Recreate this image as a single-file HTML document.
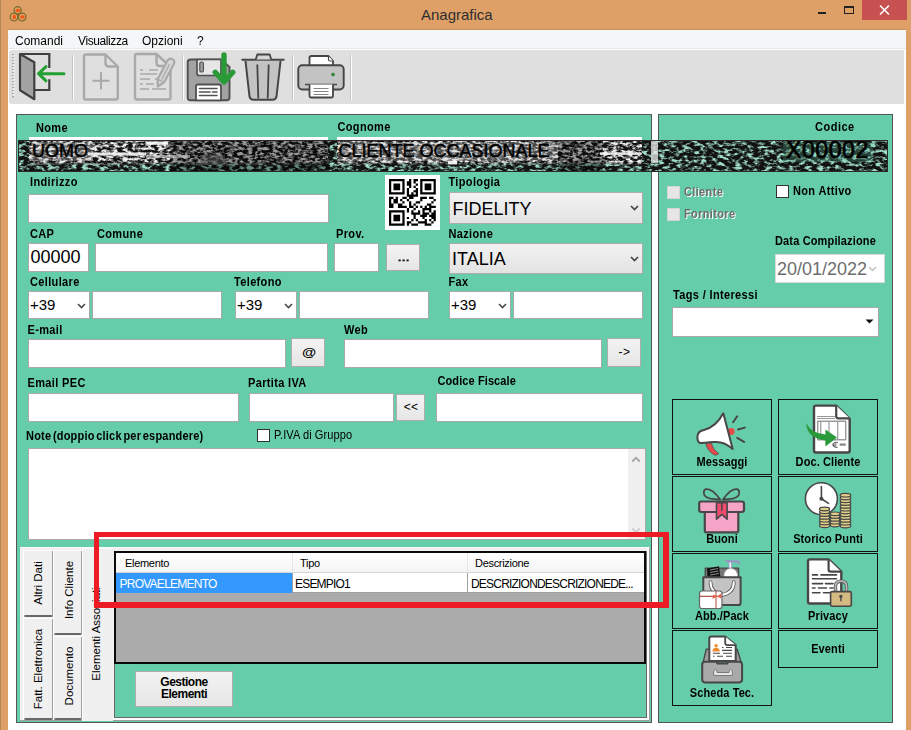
<!DOCTYPE html>
<html><head><meta charset="utf-8">
<style>
*{box-sizing:border-box;margin:0;padding:0}
html,body{width:911px;height:730px;overflow:hidden;background:#fff;font-family:"Liberation Sans",sans-serif}
.a{position:absolute}
.l{position:absolute;font:bold 11px/11px "Liberation Sans",sans-serif;color:#000;white-space:nowrap;letter-spacing:0.35px;transform:scaleY(1.08);transform-origin:0 85%}
.tb{position:absolute;background:#fff;border:1px solid #a9a9a9}
.cb{position:absolute;background:linear-gradient(#f2f2f2,#e3e3e3);border:1px solid #acacac}
.bt{position:absolute;background:linear-gradient(#f3f3f3,#e6e6e6);border:1px solid #adadad;font:bold 11px/11px "Liberation Sans",sans-serif;text-align:center}
.big{position:absolute;font:18px/18px "Liberation Sans",sans-serif;color:#000;white-space:nowrap}
.chev{position:absolute;width:7px;height:7px}
.gb{position:absolute;border:1px solid #111;background:transparent}
.gl{position:absolute;left:0;width:100%;text-align:center;font:bold 11px/11px "Liberation Sans",sans-serif;letter-spacing:0.1px;color:#000;transform:scaleY(1.08)}
</style></head>
<body>
<!-- window frame -->
<div class="a" style="left:0;top:0;width:911px;height:730px;background:#dfa068"></div>
<div class="a" style="left:0;top:0;width:1px;height:730px;background:#b88555"></div>
<div class="a" style="left:8px;top:29px;width:898px;height:701px;background:#fff;border-top:1px solid #c99060"></div>
<!-- title -->
<div class="a" style="left:421px;top:7px;font:15px/15px 'Liberation Sans',sans-serif;color:#2e2e2e">Anagrafica</div>
<!-- close -->
<div class="a" style="left:862px;top:0;width:45px;height:20px;background:#c75050"></div>
<svg class="a" style="left:862px;top:0" width="45" height="20"><path d="M18 5.5L27 14.5M27 5.5L18 14.5" stroke="#fff" stroke-width="1.6"/></svg>
<div class="a" style="left:844px;top:6px;width:10px;height:8px;border:1px solid #222;border-top-width:2px"></div>
<div class="a" style="left:818px;top:12px;width:8px;height:2px;background:#222"></div>
<!-- app icon -->
<svg class="a" style="left:8px;top:4px" width="22" height="20" viewBox="0 0 22 20">
<g fill="#f05a14"><ellipse cx="10" cy="6.5" rx="2.3" ry="1.8"/><ellipse cx="6.3" cy="13" rx="1.8" ry="2.3"/><ellipse cx="14.5" cy="13" rx="2.3" ry="1.7"/><circle cx="10" cy="11" r="1.3"/></g>
<g fill="none" stroke="#7b6c32" stroke-width="1.3"><circle cx="9.7" cy="6.2" r="3.6"/><circle cx="6" cy="13" r="3.8"/><circle cx="14.2" cy="13" r="3.8"/></g>
</svg>
<!-- menu bar -->
<div class="a" style="left:8px;top:30px;width:898px;height:19px;background:#f5f6f7;border-bottom:1px solid #e8e9ea"></div>
<div class="a" style="left:15px;top:33.5px;font:12px/14px 'Liberation Sans',sans-serif;color:#000;transform:scaleY(1.1)">Comandi</div>
<div class="a" style="left:78px;top:33.5px;font:12px/14px 'Liberation Sans',sans-serif;color:#000;transform:scaleY(1.1);letter-spacing:-0.4px">Visualizza</div>
<div class="a" style="left:142px;top:33.5px;font:12px/14px 'Liberation Sans',sans-serif;color:#000;transform:scaleY(1.1)">Opzioni</div>
<div class="a" style="left:197px;top:33.5px;font:12px/14px 'Liberation Sans',sans-serif;color:#000;transform:scaleY(1.1)">?</div>
<!-- toolbar -->
<div class="a" style="left:9px;top:50px;width:895px;height:54px;background:#dfdfdf;border-radius:3px 0 0 3px"></div>
<svg class="a" style="left:0;top:0" width="911" height="110" viewBox="0 0 911 110">
<!-- grip -->
<g fill="#a8a8a8"><rect x="12" y="54" width="2" height="1.4"/><rect x="12" y="57" width="2" height="1.4"/><rect x="12" y="60" width="2" height="1.4"/><rect x="12" y="63" width="2" height="1.4"/><rect x="12" y="66" width="2" height="1.4"/><rect x="12" y="69" width="2" height="1.4"/><rect x="12" y="72" width="2" height="1.4"/><rect x="12" y="75" width="2" height="1.4"/><rect x="12" y="78" width="2" height="1.4"/><rect x="12" y="81" width="2" height="1.4"/><rect x="12" y="84" width="2" height="1.4"/><rect x="12" y="87" width="2" height="1.4"/><rect x="12" y="90" width="2" height="1.4"/><rect x="12" y="93" width="2" height="1.4"/><rect x="12" y="96" width="2" height="1.4"/></g>
<g fill="#fafafa"><rect x="13" y="55" width="1.5" height="1.4"/><rect x="13" y="58" width="1.5" height="1.4"/><rect x="13" y="61" width="1.5" height="1.4"/><rect x="13" y="64" width="1.5" height="1.4"/><rect x="13" y="67" width="1.5" height="1.4"/><rect x="13" y="70" width="1.5" height="1.4"/><rect x="13" y="73" width="1.5" height="1.4"/><rect x="13" y="76" width="1.5" height="1.4"/><rect x="13" y="79" width="1.5" height="1.4"/><rect x="13" y="82" width="1.5" height="1.4"/><rect x="13" y="85" width="1.5" height="1.4"/><rect x="13" y="88" width="1.5" height="1.4"/><rect x="13" y="91" width="1.5" height="1.4"/><rect x="13" y="94" width="1.5" height="1.4"/></g>
<!-- separators -->
<g><rect x="72" y="55" width="1" height="45" fill="#c4c4c4"/><rect x="73" y="55" width="1" height="45" fill="#fff"/>
<rect x="182" y="55" width="1" height="45" fill="#c4c4c4"/><rect x="183" y="55" width="1" height="45" fill="#fff"/>
<rect x="292" y="55" width="1" height="45" fill="#c4c4c4"/><rect x="293" y="55" width="1" height="45" fill="#fff"/>
<rect x="350" y="55" width="1" height="45" fill="#c4c4c4"/><rect x="351" y="55" width="1" height="45" fill="#fff"/></g>
<!-- exit -->
<path d="M20 54H49.3V68M49.3 79.3V90H34.5" fill="none" stroke="#404040" stroke-width="2.2"/>
<path d="M20 54L34.3 62.2V99.2L20 90.3Z" fill="#a3a3a3" stroke="#404040" stroke-width="2.2" stroke-linejoin="round"/>
<path d="M38.6 73.7H64M46 66.6L38.6 73.7L46 80.8" fill="none" stroke="#24a032" stroke-width="3" stroke-linecap="round" stroke-linejoin="round"/>
<!-- new doc -->
<path d="M86 54.5H105.5L117.8 66.5V97.5Q117.8 99.5 115.8 99.5H86Q84 99.5 84 97.5V56.5Q84 54.5 86 54.5Z" fill="none" stroke="#a9a9a9" stroke-width="2.4" stroke-linejoin="round"/>
<path d="M105.5 54.5V63Q105.5 66.5 109 66.5H117.8" fill="none" stroke="#a9a9a9" stroke-width="2.4"/>
<path d="M92.5 80.7H109.5M101 72V89.5" stroke="#a9a9a9" stroke-width="2"/>
<!-- edit doc -->
<path d="M137 54H156.5L170.5 67V97.5Q170.5 99.5 168.5 99.5H137Q135 99.5 135 97.5V56Q135 54 137 54Z" fill="none" stroke="#a9a9a9" stroke-width="2.4" stroke-linejoin="round"/>
<path d="M156.5 54V63Q156.5 66 159.5 66H164" fill="none" stroke="#a9a9a9" stroke-width="2.4"/>
<path d="M140 70H143M149 70H158M140 74H157M140 79H150M155 79H158M140 84H143M146 84H154M140 89H149M152 89H166" stroke="#a9a9a9" stroke-width="1.6"/>
<g transform="translate(157.8,86.5) rotate(28)"><path d="M-3.6 -6.5L0 0L3.6 -6.5V-27.5Q3.6 -31 0 -31Q-3.6 -31 -3.6 -27.5Z" fill="#d6d6d6" stroke="#a9a9a9" stroke-width="2.2" stroke-linejoin="round"/><path d="M-3.6 -6.5H3.6M0 -8V-25" stroke="#a9a9a9" stroke-width="1.3"/></g>

<!-- floppy -->
<path d="M191 59.5H221L229.5 67V97.5Q229.5 100.3 226.7 100.3H190.5Q187.7 100.3 187.7 97.5V62.3Q187.7 59.5 190.5 59.5Z" fill="#a2a2a2" stroke="#505050" stroke-width="1.9" stroke-linejoin="round"/>
<path d="M197 59.5H221V73.5Q221 75.5 219 75.5H199Q197 75.5 197 73.5Z" fill="#e6e6e6" stroke="#505050" stroke-width="1.7"/>
<rect x="199.8" y="62" width="3.6" height="10" rx="1.6" fill="#a2a2a2" stroke="#505050" stroke-width="1.2"/>
<path d="M196 100.3V86.5Q196 84.5 198 84.5H219Q221 84.5 221 86.5V100.3Z" fill="#fff" stroke="#505050" stroke-width="1.8"/>
<path d="M199.5 88.5H217M199.5 92H210M212.5 92H217M199.5 95.5H217" stroke="#505050" stroke-width="1.5" stroke-linecap="round"/>
<path d="M224 55V81.5M215.2 72.3L224 82L232.8 72.3" fill="none" stroke="#2a9a38" stroke-width="5.4" stroke-linecap="round" stroke-linejoin="round"/>
<!-- trash -->
<path d="M245.5 61L249.5 96.5Q250.2 99.8 253.5 99.8H272.5Q275.8 99.8 276.5 96.5L280.5 61" fill="#c3c3c3" stroke="#454545" stroke-width="2" stroke-linejoin="round"/>
<path d="M241.5 59.8H284.5" stroke="#454545" stroke-width="2.1"/>
<path d="M255.8 59.5L257.3 54.5H269.7L271.2 59.5" fill="#d6d6d6" stroke="#454545" stroke-width="1.8" stroke-linejoin="round"/>
<path d="M257.3 64.5L258.3 98.5M268.7 64.5L267.7 98.5" stroke="#454545" stroke-width="1.8"/>
<!-- printer -->
<path d="M309.5 65.5V57.8Q309.5 56 311.3 56H328.5L333 61V65.5" fill="#fff" stroke="#454545" stroke-width="1.8" stroke-linejoin="round"/>
<path d="M328.5 56V59.5Q328.5 61 330 61H333" fill="#fff" stroke="#454545" stroke-width="1.2"/>
<rect x="298.3" y="65.3" width="45.4" height="24.2" rx="4" fill="#c3c3c3" stroke="#454545" stroke-width="1.9"/>
<path d="M305 84.5H337" stroke="#454545" stroke-width="1.5"/>
<path d="M309.5 84.5V96Q309.5 97.5 311 97.5H331.5Q333 97.5 333 96V84.5" fill="#fff" stroke="#454545" stroke-width="1.8"/>
<path d="M313.5 88.5H328.5M313.5 91.5H328.5M313.5 94.5H328.5" stroke="#777" stroke-width="0.9"/>
<circle cx="333" cy="74.5" r="1.5" fill="#1f9a32" stroke="#2a5a2a" stroke-width="0.5"/>
</svg>

<!-- panels -->
<div class="a" style="left:16px;top:114px;width:636px;height:609px;background:#66cdaa;border:1px solid #555"></div>
<div class="a" style="left:658px;top:114px;width:235px;height:609px;background:#66cdaa;border:1px solid #555"></div>

<div class="l" style="left:36px;top:122.5px;">Nome</div>
<div class="l" style="left:337.5px;top:121.5px;">Cognome</div>
<div class="l" style="left:815px;top:122px;letter-spacing:0.5px">Codice</div>
<div class="l" style="left:30px;top:177px;">Indirizzo</div>
<div class="l" style="left:448.5px;top:176.5px;">Tipologia</div>
<div class="l" style="left:30px;top:229px;">CAP</div>
<div class="l" style="left:97px;top:229px;">Comune</div>
<div class="l" style="left:336px;top:229px;">Prov.</div>
<div class="l" style="left:448.5px;top:229px;">Nazione</div>
<div class="l" style="left:30px;top:277px;">Cellulare</div>
<div class="l" style="left:234px;top:277px;">Telefono</div>
<div class="l" style="left:448.5px;top:277px;">Fax</div>
<div class="l" style="left:27.5px;top:325px;">E-mail</div>
<div class="l" style="left:344px;top:325px;">Web</div>
<div class="l" style="left:27.5px;top:378px;">Email PEC</div>
<div class="l" style="left:248px;top:378px;">Partita IVA</div>
<div class="l" style="left:437.5px;top:376px;letter-spacing:0.1px">Codice Fiscale</div>
<div class="l" style="left:26px;top:431px;word-spacing:-1.6px;letter-spacing:0.2px">Note (doppio click per espandere)</div>
<div class="l" style="left:274px;top:429.5px;font-weight:normal;font-size:11px;letter-spacing:0.1px">P.IVA di Gruppo</div>
<div class="a" style="left:29px;top:137px;width:299px;height:3px;background:#fff"></div>
<div class="a" style="left:337px;top:137px;width:305px;height:3px;background:#fff"></div>
<div class="tb" style="left:28px;top:194px;width:301px;height:29px;"></div>
<div class="tb" style="left:28px;top:243px;width:61px;height:29px;"></div>
<div class="tb" style="left:95px;top:243px;width:233px;height:29px;"></div>
<div class="tb" style="left:334px;top:243px;width:45px;height:29px;"></div>
<div class="bt" style="left:386px;top:244px;width:34px;height:27px;line-height:25px;"></div><svg class="a" style="left:398px;top:259px" width="12" height="3"><rect x="0.5" y="0.5" width="2.2" height="1.8" fill="#111"/><rect x="4.5" y="0.5" width="2.2" height="1.8" fill="#111"/><rect x="8.5" y="0.5" width="2.2" height="1.8" fill="#111"/></svg>
<div class="cb" style="left:449px;top:192px;width:194px;height:32px"></div>
<div class="cb" style="left:449px;top:243px;width:194px;height:31px"></div>
<div class="tb" style="left:28px;top:291px;width:62px;height:28px;"></div>
<div class="tb" style="left:92px;top:291px;width:130px;height:28px;"></div>
<div class="tb" style="left:235px;top:291px;width:62px;height:28px;"></div>
<div class="tb" style="left:299px;top:291px;width:130px;height:28px;"></div>
<div class="tb" style="left:449px;top:291px;width:62px;height:28px;"></div>
<div class="tb" style="left:513px;top:291px;width:130px;height:28px;"></div>
<div class="tb" style="left:28px;top:339px;width:258px;height:29px;"></div>
<div class="bt" style="left:291px;top:338px;width:34px;height:29px;line-height:27px;"></div><div class="a" style="left:309px;top:351.5px;transform:translate(-50%,-50%) scale(1.12,0.82);font:bold 13px/13px 'Liberation Sans',sans-serif;color:#000">@</div>
<div class="tb" style="left:344px;top:339px;width:258px;height:29px;"></div>
<div class="bt" style="left:607px;top:338px;width:34px;height:29px;line-height:27px;font-weight:normal;font-size:12px;letter-spacing:0.6px;padding-left:1px">-&gt;</div>
<div class="tb" style="left:28px;top:393px;width:211px;height:29px;"></div>
<div class="tb" style="left:249px;top:393px;width:145px;height:29px;"></div>
<div class="bt" style="left:396px;top:394px;width:29px;height:27px;line-height:25px;font-weight:normal;font-size:12px;letter-spacing:0.3px;padding-left:1px">&lt;&lt;</div>
<div class="tb" style="left:436px;top:393px;width:207px;height:29px;"></div>
<div class="tb" style="left:257px;top:429px;width:13px;height:13px;border-color:#333"></div>
<div class="tb" style="left:28px;top:448px;width:618px;height:92px;"></div>
<div class="big" style="left:30.5px;top:247.5px;">00000</div>
<div class="big" style="left:452.5px;top:199.5px;">FIDELITY</div>
<div class="big" style="left:452px;top:249.5px;">ITALIA</div>
<div class="big" style="left:30px;top:297px;font-size:15px;line-height:15px">+39</div>
<div class="big" style="left:237px;top:297px;font-size:15px;line-height:15px">+39</div>
<div class="big" style="left:451px;top:297px;font-size:15px;line-height:15px">+39</div>
<svg class="a" style="left:630px;top:205px" width="9" height="6" viewBox="0 0 9 6"><path d="M1 1L4.5 4.5L8 1" fill="none" stroke="#444" stroke-width="1.7"/></svg>
<svg class="a" style="left:630px;top:256px" width="9" height="6" viewBox="0 0 9 6"><path d="M1 1L4.5 4.5L8 1" fill="none" stroke="#444" stroke-width="1.7"/></svg>
<svg class="a" style="left:77px;top:303px" width="9" height="6" viewBox="0 0 9 6"><path d="M1 1L4.5 4.5L8 1" fill="none" stroke="#4a4a4a" stroke-width="1.6"/></svg>
<svg class="a" style="left:284px;top:303px" width="9" height="6" viewBox="0 0 9 6"><path d="M1 1L4.5 4.5L8 1" fill="none" stroke="#4a4a4a" stroke-width="1.6"/></svg>
<svg class="a" style="left:498px;top:303px" width="9" height="6" viewBox="0 0 9 6"><path d="M1 1L4.5 4.5L8 1" fill="none" stroke="#4a4a4a" stroke-width="1.6"/></svg>
<div class="a" style="left:628px;top:449px;width:17px;height:90px;background:#f0f0f0"></div>
<svg class="a" style="left:631px;top:456px" width="10" height="7" viewBox="0 0 10 7"><path d="M1.2 5.5L5 1.8L8.8 5.5" fill="none" stroke="#a6a6a6" stroke-width="2"/></svg>
<svg class="a" style="left:631px;top:527px" width="10" height="7" viewBox="0 0 10 7"><path d="M1.2 1.5L5 5.2L8.8 1.5" fill="none" stroke="#cdcdcd" stroke-width="2"/></svg>

<div class="a" style="left:385px;top:175px;width:55px;height:55px;background:#fff"></div><svg class="a" style="left:389.2px;top:179.2px" width="46.8" height="46.8" viewBox="0 0 21 21"><path fill="#000" d="M0 0h7v1h-7zM9 0h1v1h-1zM11 0h2v1h-2zM14 0h7v1h-7zM0 1h1v1h-1zM6 1h1v1h-1zM8 1h2v1h-2zM11 1h1v1h-1zM14 1h1v1h-1zM20 1h1v1h-1zM0 2h1v1h-1zM2 2h3v1h-3zM6 2h1v1h-1zM8 2h2v1h-2zM12 2h1v1h-1zM14 2h1v1h-1zM16 2h3v1h-3zM20 2h1v1h-1zM0 3h1v1h-1zM2 3h3v1h-3zM6 3h1v1h-1zM9 3h1v1h-1zM11 3h1v1h-1zM14 3h1v1h-1zM16 3h3v1h-3zM20 3h1v1h-1zM0 4h1v1h-1zM2 4h3v1h-3zM6 4h1v1h-1zM8 4h1v1h-1zM12 4h1v1h-1zM14 4h1v1h-1zM16 4h3v1h-3zM20 4h1v1h-1zM0 5h1v1h-1zM6 5h1v1h-1zM8 5h1v1h-1zM11 5h2v1h-2zM14 5h1v1h-1zM20 5h1v1h-1zM0 6h7v1h-7zM8 6h1v1h-1zM10 6h1v1h-1zM12 6h1v1h-1zM14 6h7v1h-7zM8 7h5v1h-5zM0 8h2v1h-2zM3 8h1v1h-1zM6 8h2v1h-2zM9 8h2v1h-2zM14 8h3v1h-3zM18 8h2v1h-2zM0 9h1v1h-1zM2 9h2v1h-2zM5 9h1v1h-1zM8 9h1v1h-1zM14 9h1v1h-1zM20 9h1v1h-1zM0 10h1v1h-1zM2 10h2v1h-2zM6 10h1v1h-1zM9 10h1v1h-1zM12 10h2v1h-2zM19 10h1v1h-1zM0 11h2v1h-2zM4 11h2v1h-2zM9 11h1v1h-1zM11 11h1v1h-1zM17 11h2v1h-2zM0 12h2v1h-2zM4 12h4v1h-4zM9 12h2v1h-2zM12 12h1v1h-1zM14 12h1v1h-1zM16 12h1v1h-1zM18 12h3v1h-3zM8 13h1v1h-1zM11 13h1v1h-1zM15 13h4v1h-4zM0 14h7v1h-7zM8 14h1v1h-1zM10 14h1v1h-1zM13 14h1v1h-1zM15 14h1v1h-1zM18 14h1v1h-1zM20 14h1v1h-1zM0 15h1v1h-1zM6 15h1v1h-1zM10 15h4v1h-4zM15 15h3v1h-3zM19 15h2v1h-2zM0 16h1v1h-1zM2 16h3v1h-3zM6 16h1v1h-1zM11 16h1v1h-1zM14 16h3v1h-3zM18 16h3v1h-3zM0 17h1v1h-1zM2 17h3v1h-3zM6 17h1v1h-1zM8 17h1v1h-1zM11 17h1v1h-1zM15 17h1v1h-1zM19 17h2v1h-2zM0 18h1v1h-1zM2 18h3v1h-3zM6 18h1v1h-1zM10 18h1v1h-1zM12 18h1v1h-1zM16 18h1v1h-1zM18 18h1v1h-1zM20 18h1v1h-1zM0 19h1v1h-1zM6 19h1v1h-1zM8 19h2v1h-2zM13 19h4v1h-4zM19 19h1v1h-1zM0 20h7v1h-7zM8 20h1v1h-1zM10 20h3v1h-3zM16 20h3v1h-3z"/></svg>
<div class="tb" style="left:667px;top:186px;width:13px;height:13px;background:#e6e6e6;border-color:#d4d4d4"></div>
<div class="tb" style="left:667px;top:208px;width:13px;height:13px;background:#e6e6e6;border-color:#d4d4d4"></div>
<div class="l" style="left:684px;top:187px;color:#6d6d6d;text-shadow:1px 1px 0 #fff">Cliente</div>
<div class="l" style="left:684px;top:209px;color:#6d6d6d;text-shadow:1px 1px 0 #fff">Fornitore</div>
<div class="tb" style="left:776px;top:185px;width:13px;height:13px;border-color:#333"></div>
<div class="l" style="left:793px;top:185.5px;">Non Attivo</div>
<div class="l" style="left:775px;top:235.5px;letter-spacing:0.15px">Data Compilazione</div>
<div class="tb" style="left:775px;top:254px;width:110px;height:29px;border-color:#d8d8d8"></div>
<div class="big" style="left:777px;top:259.5px;color:#6d6d6d">20/01/2022</div>
<svg class="a" style="left:868px;top:266px" width="9" height="6" viewBox="0 0 9 6"><path d="M1 1L4.5 4.5L8 1" fill="none" stroke="#c0c0c0" stroke-width="1.5"/></svg>
<div class="l" style="left:673px;top:290px;">Tags / Interessi</div>
<div class="tb" style="left:672px;top:307px;width:207px;height:30px;"></div>
<svg class="a" style="left:865px;top:319px" width="9" height="5"><path d="M0.5 0.5H8.5L4.5 4.5Z" fill="#111"/></svg>
<svg class="a" style="left:18px;top:140px" width="870" height="32" viewBox="0 0 870 32">
<defs>
<filter id="nz" x="0" y="0" width="100%" height="100%"><feTurbulence type="fractalNoise" baseFrequency="0.2 0.38" numOctaves="3" seed="3"/><feColorMatrix type="matrix" values="0 0 0 0 0.85  0 0 0 0 0.85  0 0 0 0 0.85  3.4 0 0 0 -1.3"/></filter>
<filter id="nzg" x="0" y="0" width="100%" height="100%"><feTurbulence type="fractalNoise" baseFrequency="0.17 0.3" numOctaves="3" seed="7"/><feColorMatrix type="matrix" values="0 0 0 0 0.35  0 0 0 0 0.72  0 0 0 0 0.58  4 0 0 0 -1.8"/></filter>
<linearGradient id="fadeL" x1="0" x2="0" y1="0" y2="1"><stop offset="0" stop-color="#fff"/><stop offset="0.68" stop-color="#fff"/><stop offset="0.8" stop-color="#000"/><stop offset="1" stop-color="#000"/></linearGradient>
<mask id="mTop"><rect x="0" y="0" width="870" height="32" fill="url(#fadeL)"/></mask>
</defs>
<rect x="0" y="0" width="870" height="32" fill="#121212"/>
<rect x="0" y="0" width="870" height="32" filter="url(#nzg)"/>
<g mask="url(#mTop)">
<rect x="11" y="1" width="299" height="31" fill="#101010"/>
<rect x="319" y="1" width="305" height="31" fill="#101010"/>
<rect x="11" y="1" width="299" height="31" filter="url(#nz)"/>
<rect x="319" y="1" width="305" height="31" filter="url(#nz)"/>
</g>
<rect x="152" y="1" width="160" height="30" fill="#000" opacity="0.35"/>
<rect x="540" y="1" width="45" height="30" fill="#000" opacity="0.35"/>
<rect x="633" y="1" width="7" height="22" fill="#eee" opacity="0.75"/>
<rect x="13" y="2" width="62" height="19" fill="#c8c8c8" opacity="0.3"/>
<rect x="320" y="2" width="220" height="19" fill="#c8c8c8" opacity="0.3"/>
<rect x="765" y="2" width="90" height="20" fill="#66cdaa" opacity="0.25"/>
<rect x="70" y="12.5" width="58" height="3" fill="#f4f4f4" opacity="0.9"/>
<rect x="128" y="1.5" width="22" height="3.3" fill="#fafafa" opacity="0.9"/>
<rect x="128" y="15" width="44" height="3" fill="#d0d0d0" opacity="0.6"/>
<rect x="182" y="15" width="25" height="10" fill="#555" opacity="0.5"/>
<rect x="582" y="12.3" width="41.6" height="2.6" fill="#f4f4f4" opacity="0.9"/>
<rect x="430" y="20.6" width="9" height="3.7" fill="#fff" opacity="0.9"/>
<rect x="0.5" y="0.5" width="869" height="31" fill="none" stroke="#2a2a2a" stroke-width="1"/>
</svg>
<div class="big" style="left:32px;top:141.5px;color:#000;-webkit-text-stroke:0.5px #000">UOMO</div>
<div class="big" style="left:338.5px;top:142px;color:#000;-webkit-text-stroke:0.5px #000">CLIENTE OCCASIONALE</div>
<div class="big" style="left:786px;top:139px;font-size:23px;line-height:23px;letter-spacing:0.6px;color:#000;-webkit-text-stroke:0.7px #000">X00002</div>

<div class="a" style="left:20px;top:547px;width:630px;height:174px;background:#f0f0f0;border-top:1px solid #f9f9f9;border-right:1px solid #a0a0a0;border-bottom:1px solid #a0a0a0"></div>
<div class="a" style="left:647px;top:548px;width:2px;height:172px;background:#fff"></div><div class="a" style="left:113px;top:718px;width:536px;height:2px;background:#fff"></div>
<div class="a" style="left:23px;top:550px;width:30px;height:67px;background:#f0f0f0;border-left:1px solid #fff;border-top:1px solid #fff;box-shadow:inset -1px -2px 0 #a0a0a0;"></div><div class="a" style="left:25px;top:615px;width:27px;height:2px;background:#696969;border-radius:1px"></div><div class="a" style="left:38px;top:582.5px;transform:translate(-50%,-50%) rotate(-90deg);font:11.5px/12px 'Liberation Sans',sans-serif;color:#000;white-space:nowrap">Altri Dati</div>
<div class="a" style="left:23px;top:618px;width:30px;height:102px;background:#f0f0f0;border-left:1px solid #fff;border-top:1px solid #fff;box-shadow:inset -1px -2px 0 #a0a0a0;"></div><div class="a" style="left:25px;top:718px;width:27px;height:2px;background:#696969;border-radius:1px"></div><div class="a" style="left:38px;top:668.5px;transform:translate(-50%,-50%) rotate(-90deg);font:11.5px/12px 'Liberation Sans',sans-serif;color:#000;white-space:nowrap">Fatt. Elettronica</div>
<div class="a" style="left:53px;top:550px;width:29px;height:85px;background:#f0f0f0;border-left:1px solid #fff;border-top:1px solid #fff;box-shadow:inset -1px -2px 0 #a0a0a0;"></div><div class="a" style="left:55px;top:633px;width:26px;height:2px;background:#696969;border-radius:1px"></div><div class="a" style="left:68.5px;top:590px;transform:translate(-50%,-50%) rotate(-90deg);font:11.5px/12px 'Liberation Sans',sans-serif;color:#000;white-space:nowrap">Info Cliente</div>
<div class="a" style="left:53px;top:636px;width:29px;height:84px;background:#f0f0f0;border-left:1px solid #fff;border-top:1px solid #fff;box-shadow:inset -1px -2px 0 #a0a0a0;"></div><div class="a" style="left:55px;top:718px;width:26px;height:2px;background:#696969;border-radius:1px"></div><div class="a" style="left:68.5px;top:676px;transform:translate(-50%,-50%) rotate(-90deg);font:11.5px/12px 'Liberation Sans',sans-serif;color:#000;white-space:nowrap">Documento</div>
<div class="a" style="left:82px;top:548px;width:31px;height:173px;background:#f0f0f0;border-left:1px solid #fff;border-top:1px solid #fff;"></div><div class="a" style="left:95.5px;top:633.5px;transform:translate(-50%,-50%) rotate(-90deg);font:11.5px/12px 'Liberation Sans',sans-serif;color:#000;white-space:nowrap">Elementi Associati</div>
<div class="a" style="left:114px;top:551px;width:533px;height:167px;background:#66cdaa;border:1px solid #696969;border-top:none"></div>
<div class="a" style="left:114px;top:551px;width:532px;height:113px;background:#ababab;border:2px solid #0a0a0a;border-right-width:2px"></div>
<div class="a" style="left:116px;top:553px;width:528px;height:20px;background:linear-gradient(#ffffff,#f4f4f4);border-bottom:1px solid #d5d5d5"></div>
<div class="a" style="left:292px;top:553px;width:1px;height:20px;background:#e3e8ee"></div><div class="a" style="left:467px;top:553px;width:1px;height:20px;background:#e3e8ee"></div>
<div class="a" style="left:116px;top:573px;width:176px;height:20px;background:#3399ff"></div>
<div class="a" style="left:292px;top:573px;width:352px;height:20px;background:#fff;border-bottom:1px solid #a0a0a0"></div>
<div class="a" style="left:292px;top:573px;width:1px;height:20px;background:#a0a0a0"></div><div class="a" style="left:467px;top:573px;width:1px;height:20px;background:#a0a0a0"></div>
<div class="a" style="left:125px;top:557px;font:11px/12px 'Liberation Sans',sans-serif;letter-spacing:-0.3px">Elemento</div>
<div class="a" style="left:300px;top:557px;font:11px/12px 'Liberation Sans',sans-serif;letter-spacing:-0.3px">Tipo</div>
<div class="a" style="left:475px;top:557px;font:11px/12px 'Liberation Sans',sans-serif;letter-spacing:-0.3px">Descrizione</div>
<div class="a" style="left:119.5px;top:578px;font:12px/13px 'Liberation Sans',sans-serif;color:#fff;letter-spacing:-0.75px">PROVAELEMENTO</div>
<div class="a" style="left:295px;top:578px;font:12px/13px 'Liberation Sans',sans-serif;color:#000;letter-spacing:-0.8px">ESEMPIO1</div>
<div class="a" style="left:471px;top:578px;font:12px/13px 'Liberation Sans',sans-serif;color:#000;letter-spacing:-0.8px">DESCRIZIONDESCRIZIONEDE...</div>
<div class="bt" style="left:135px;top:671px;width:98px;height:36px;line-height:12px;padding-top:4px;letter-spacing:-0.5px;font-size:12px">Gestione<br>Elementi</div>
<div class="a" style="left:94px;top:532px;width:575px;height:76px;border:5px solid #ed1c24;border-right-width:6px;border-bottom-width:6px"></div>
<div class="gb" style="left:672px;top:399px;width:100px;height:76px"><div class="gl" style="top:57px">Messaggi</div></div>
<div class="gb" style="left:778px;top:399px;width:100px;height:76px"><div class="gl" style="top:57px">Doc. Cliente</div></div>
<div class="gb" style="left:672px;top:476px;width:100px;height:76px"><div class="gl" style="top:57px">Buoni</div></div>
<div class="gb" style="left:778px;top:476px;width:100px;height:76px"><div class="gl" style="top:57px">Storico Punti</div></div>
<div class="gb" style="left:672px;top:553px;width:100px;height:76px"><div class="gl" style="top:57px">Abb./Pack</div></div>
<div class="gb" style="left:778px;top:553px;width:100px;height:76px"><div class="gl" style="top:57px">Privacy</div></div>
<div class="gb" style="left:672px;top:630px;width:100px;height:76px"><div class="gl" style="top:57px">Scheda Tec.</div></div>
<div class="gb" style="left:778px;top:630px;width:100px;height:38px"><div class="gl" style="top:13px">Eventi</div></div>
<svg class="a" style="left:0;top:0" width="911" height="730" viewBox="0 0 911 730">
<g transform="translate(692,405)" stroke="#474747" stroke-linecap="round" stroke-linejoin="round">
 <path d="M13.8 38.5Q15.5 46.5 22.5 50Q25 50.5 26.8 48.5Q21.5 45.5 19.5 38.5Z" fill="#e84848" stroke="#555" stroke-width="0.9"/>
 <circle cx="39" cy="26.5" r="3.6" fill="#e84848" stroke="none"/>
 <path d="M31.3 8.3L40.7 44.1Q32 36 22 37Q12 37.8 8 38Q5 37 5.5 31Q6 26 12 25Q24 22 31.3 8.3Z" fill="#fff" stroke-width="2"/>
 <path d="M41.1 17.3L45.2 11.3M46 24.5L52.8 22.6M45.2 32.8L52 36.9" stroke-width="2"/>
</g>
<g transform="translate(798,400)" stroke-linejoin="round">
 <path d="M18 5.6H38.2L51.7 18.8V50.5Q51.7 52.5 49.7 52.5H18Q16 52.5 16 50.5V7.6Q16 5.6 18 5.6Z" fill="#fff" stroke="#474747" stroke-width="2.4"/>
 <path d="M38.2 5.6V16Q38.2 18.3 40.5 18.3H51.7" fill="#fff" stroke="#474747" stroke-width="2.2"/>
 <path d="M19 16.5H37M19 18.5H37" stroke="#8a8a8a" stroke-width="0.9"/>
 <rect x="19.7" y="21.2" width="28" height="18.5" fill="none" stroke="#9a9a9a" stroke-width="1.4"/>
 <path d="M22.7 21.2V39.7M31 21.2V39.7M39.7 21.2V39.7" stroke="#9a9a9a" stroke-width="1.2"/>
 <path d="M40 42.5Q36 41.5 35 44.8Q35.5 48 39.5 47.5M34.5 44H38.5M34.5 45.8H38.5" fill="none" stroke="#474747" stroke-width="0.9"/>
 <rect x="41.7" y="43.4" width="6" height="2.4" fill="#8a8a8a"/>
 <path d="M8.3 23Q8.5 38 27.4 40.5V46.5L39 37.4L27.4 29.4V34.5Q13 33.5 8.3 23Z" fill="#2a9a3a" stroke="none"/>
</g>
<g transform="translate(692,480)" stroke="#474747" stroke-linejoin="round">
 <path d="M28.3 19.6Q20 8 14 9.2Q10.5 10.5 12.5 15.5Q15 19.3 28.3 19.6ZM30.9 19.6Q39 8 45 9.2Q48.5 10.5 46.5 15.5Q44 19.3 30.9 19.6Z" fill="none" stroke-width="1.8"/>
 <rect x="12.8" y="31" width="33.5" height="21.4" rx="2" fill="#f5a3c7" stroke-width="2.2"/>
 <rect x="7.2" y="21.5" width="44.8" height="10.5" rx="2.2" fill="#f5a3c7" stroke-width="2.2"/>
 <path d="M24.5 22.6V39.2L29.8 34.3L35.1 39.2V22.6Z" fill="#f04a6e" stroke-width="1.6"/>
 <path d="M29.8 22.6V30.8" stroke-width="1.6"/>
</g>
<g transform="translate(798,476)" stroke="#474747">
 <circle cx="23.4" cy="22.7" r="16" fill="#fff" stroke-width="1.6"/>
 <path d="M23.4 10.5V22.7L30.5 27.3" fill="none" stroke-width="1.6" stroke-linecap="round"/>
 <circle cx="23.4" cy="22.7" r="2" fill="#474747" stroke="none"/>
 <g fill="#e0cd88" stroke-width="1.2">
 <ellipse cx="26.6" cy="49.8" rx="5.1" ry="1.8"/><ellipse cx="26.6" cy="47.0" rx="5.1" ry="1.8"/><ellipse cx="26.6" cy="44.2" rx="5.1" ry="1.8"/><ellipse cx="26.6" cy="41.4" rx="5.1" ry="1.8"/><ellipse cx="26.6" cy="38.6" rx="5.1" ry="1.8"/><ellipse cx="26.6" cy="35.8" rx="5.1" ry="1.8"/><ellipse cx="26.6" cy="33.0" rx="5.1" ry="1.8"/><ellipse cx="37" cy="49.0" rx="4.8" ry="1.8"/><ellipse cx="37" cy="46.2" rx="4.8" ry="1.8"/><ellipse cx="37" cy="43.4" rx="4.8" ry="1.8"/><ellipse cx="37" cy="40.6" rx="4.8" ry="1.8"/><ellipse cx="37" cy="37.8" rx="4.8" ry="1.8"/><ellipse cx="47.5" cy="50.0" rx="5.3" ry="1.8"/><ellipse cx="47.5" cy="47.2" rx="5.3" ry="1.8"/><ellipse cx="47.5" cy="44.4" rx="5.3" ry="1.8"/><ellipse cx="47.5" cy="41.6" rx="5.3" ry="1.8"/><ellipse cx="47.5" cy="38.8" rx="5.3" ry="1.8"/><ellipse cx="47.5" cy="36.0" rx="5.3" ry="1.8"/><ellipse cx="47.5" cy="33.2" rx="5.3" ry="1.8"/><ellipse cx="47.5" cy="30.4" rx="5.3" ry="1.8"/><ellipse cx="47.5" cy="27.6" rx="5.3" ry="1.8"/><ellipse cx="47.5" cy="24.8" rx="5.3" ry="1.8"/><ellipse cx="47.5" cy="22.0" rx="5.3" ry="1.8"/><ellipse cx="47.5" cy="19.2" rx="5.3" ry="1.8"/>
 </g>
</g>
<g transform="translate(692,555)" stroke-linejoin="round">
 <rect x="13.2" y="13.2" width="33.5" height="10" fill="#747474" stroke="#474747" stroke-width="1.2"/>
 <path d="M15 13.5L27 11.3L28.5 23H15.5Z" fill="#111"/>
 <path d="M18 15L26 13.5M18 17.5L26.5 16M18 20L27 18.5" stroke="#bbb" stroke-width="0.7"/>
 <path d="M33.9 6.2Q35 5 38 6.5H46Q47.5 6.8 46.5 9" fill="none" stroke="#a090c8" stroke-width="2"/>
 <rect x="37" y="7" width="2.4" height="6" fill="#fff" stroke="#a090c8" stroke-width="0.8"/>
 <path d="M32 23Q31.5 14 38.8 13.5Q46 14 45.5 23Z" fill="#fff" stroke="#ccc" stroke-width="0.8"/>
 <path d="M11.3 22.2H48.6V48Q48.6 50.1 46.5 50.1H13.4Q11.3 50.1 11.3 48Z" fill="#c3c3c3" stroke="#474747" stroke-width="2"/>
 <path d="M18.5 27.1Q18.5 38 30.1 40Q41.8 38 41.8 27.1" fill="none" stroke="#555" stroke-width="3.6" stroke-linecap="round"/>
 <path d="M18.5 27.1Q18.5 38 30.1 40Q41.8 38 41.8 27.1" fill="none" stroke="#fff" stroke-width="2" stroke-linecap="round"/>
 <rect x="7.5" y="36" width="22.5" height="17.5" rx="2.5" fill="#fff" stroke="#666" stroke-width="1.2"/>
 <path d="M24 36V53.5M7.5 41.4H30" stroke="#b05848" stroke-width="1.1"/>
 <path d="M25 41.5L21 39.5L20.5 44ZM25 41.5L29 38.5L29 43.5Z" fill="#e86050"/>
</g>
<g transform="translate(798,553)" stroke="#474747" stroke-linejoin="round">
 <path d="M12 6.4H30.6L43.3 18.7V48.5Q43.3 50.5 41.3 50.5H12Q10 50.5 10 48.5V8.4Q10 6.4 12 6.4Z" fill="#fff" stroke-width="2.4"/>
 <path d="M30.6 6.4V16.5Q30.6 18.7 32.8 18.7H43.3" fill="#fff" stroke-width="2.2"/>
 <path d="M14.5 21.9H19.5M23 21.9H38.5M14.5 25.8H38.5M14.5 30.6H24.5M27.5 30.6H35M14.5 35H17M20.5 35H28.5M32 35H35M14.5 39.7H22M25.5 39.7H32" stroke-width="1.6" stroke-linecap="round"/>
 <path d="M37.5 39V33Q37.5 28.2 43 28.2Q48.5 28.2 48.5 33V39" fill="none" stroke="#555" stroke-width="3.4"/>
 <path d="M37.5 39V33Q37.5 28.2 43 28.2Q48.5 28.2 48.5 33V39" fill="none" stroke="#b8b8b8" stroke-width="1.8"/>
 <rect x="32.6" y="38.6" width="20.7" height="14.7" rx="1.5" fill="#d4b982" stroke-width="1.6"/>
 <circle cx="42.9" cy="43.3" r="1.6" fill="#474747" stroke="none"/>
 <path d="M42.2 44V48.3H43.6V44Z" fill="#474747" stroke="none"/>
</g>
<g transform="translate(692,630)" stroke="#474747" stroke-linejoin="round">
 <path d="M14.3 19.2L11.3 31.7H49L45.2 19.2Z" fill="#9c9c9c" stroke-width="1.4"/>
 <path d="M19.3 6.4H33.2L43.7 15.1V30.9H17.3V8.4Q17.3 6.4 19.3 6.4Z" fill="#fff" stroke-width="2"/>
 <path d="M33.2 6.4V13Q33.2 15.1 35.3 15.1H43.7" fill="#fff" stroke-width="1.8"/>
 <circle cx="24.1" cy="15.8" r="1.7" fill="#f08a30" stroke="none"/>
 <path d="M20.5 21.5Q20.5 17.8 24.1 17.8Q27.7 17.8 27.7 21.5Z" fill="#f08a30" stroke="none"/>
 <path d="M30 17.5H31.5M34 17.5H40M30 20.4H40M21 23.3H28M31 23.3H40M21 26.3H22.5M25 26.3H31M34 26.3H40" stroke-width="1.1"/>
 <path d="M10.2 34.5Q10.2 31.7 13 31.7H24.5L25.5 33.5H35.2L36.2 31.7H47.3Q50.1 31.7 50.1 34.5V49.6Q50.1 52.4 47.3 52.4H13Q10.2 52.4 10.2 49.6Z" fill="#a9a9a9" stroke-width="2"/>
 <path d="M21.8 45.5Q21 40 23.5 39.5Q25 39.8 25 42.5H37Q37 39.8 38.5 39.5Q41 40 40.2 45.5Z" fill="#e6e6e6" stroke="#7a7a7a" stroke-width="1"/>
</g>
</svg>
</body></html>
